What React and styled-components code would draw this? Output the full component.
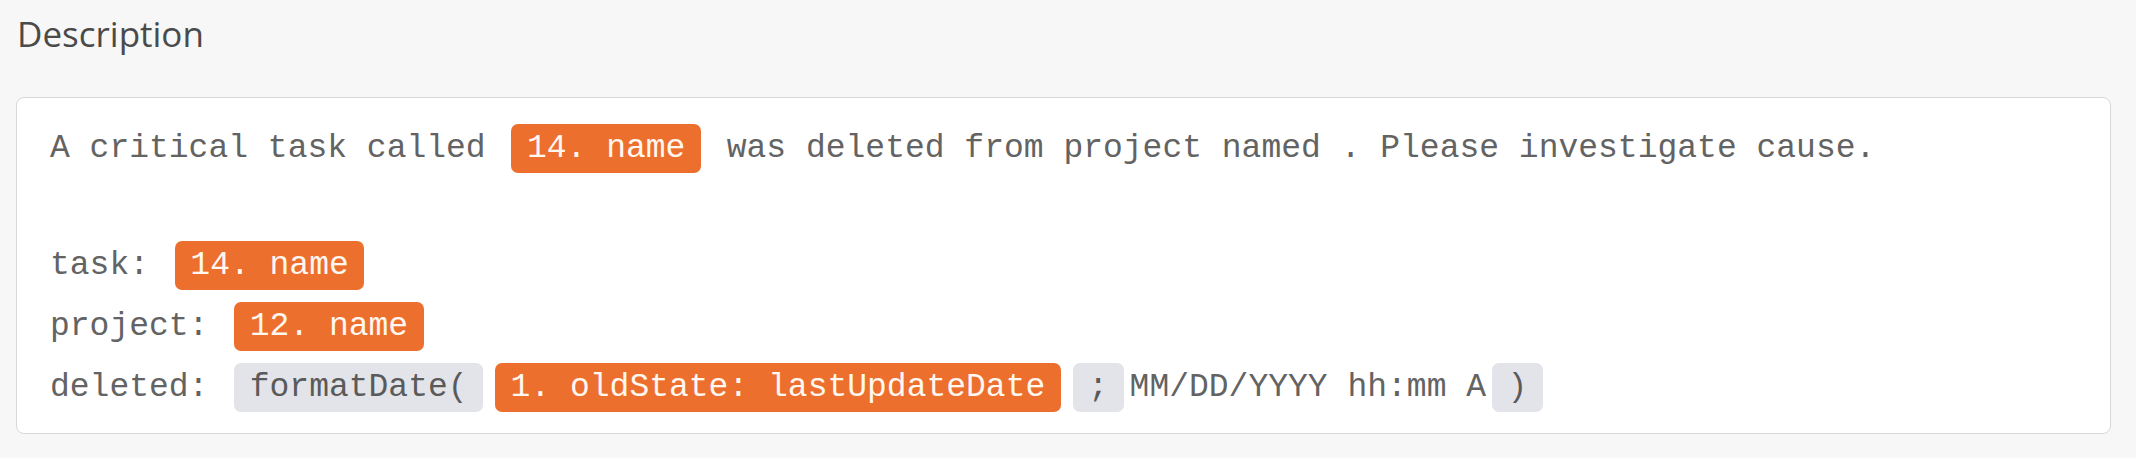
import styled, { createGlobalStyle } from "styled-components";

const GlobalStyle = createGlobalStyle`
  html, body {
    margin: 0;
    padding: 0;
    background: #f7f7f7;
  }
`;

const Page = styled.div`
  padding: 10px 25px 23px 16px;
`;

const Title = styled.h2`
  margin: 0 0 39px 1px;
  font-family: "Open Sans", "Noto Sans", sans-serif;
  font-weight: 400;
  font-size: 35px;
  line-height: 48px;
  color: #4a4a4a;
`;

const Card = styled.div`
  background: #fff;
  border: 1px solid #d8d8d8;
  border-radius: 8px;
  padding: 26px 33px 21px 33px;
  display: flex;
  flex-direction: column;
  gap: 12px;
  font-family: "Liberation Mono", "Courier New", monospace;
  font-size: 33px;
  color: #636363;
`;

const Line = styled.div`
  display: flex;
  align-items: center;
  height: 49px;
  white-space: pre;
  margin-bottom: ${(p) => (p.$spaced ? "56px" : "0")};
`;

// orange chips are data fields, grey ones are function syntax
const Pill = styled.span`
  display: inline-flex;
  align-items: center;
  height: 49px;
  padding: 0 15.5px;
  margin: 0 6px;
  border-radius: 7px;
  background: ${(p) => (p.$field ? "#ec6f2d" : "#e3e4e9")};
  color: ${(p) => (p.$field ? "#fff7f0" : "#5a5a5a")};
`;

function App() {
  return (
    <Page>
      <GlobalStyle />
      <Title>Description</Title>
      <Card>
        <Line $spaced>
          {"A critical task called "}
          <Pill $field>14. name</Pill>
          {" was deleted from project named . Please investigate cause."}
        </Line>
        <Line>
          {"task: "}
          <Pill $field>14. name</Pill>
        </Line>
        <Line>
          {"project: "}
          <Pill $field>12. name</Pill>
        </Line>
        <Line>
          {"deleted: "}
          <Pill>formatDate(</Pill>
          <Pill $field>1. oldState: lastUpdateDate</Pill>
          <Pill>;</Pill>
          {"MM/DD/YYYY hh:mm A"}
          <Pill>)</Pill>
        </Line>
      </Card>
    </Page>
  );
}

export default App;
